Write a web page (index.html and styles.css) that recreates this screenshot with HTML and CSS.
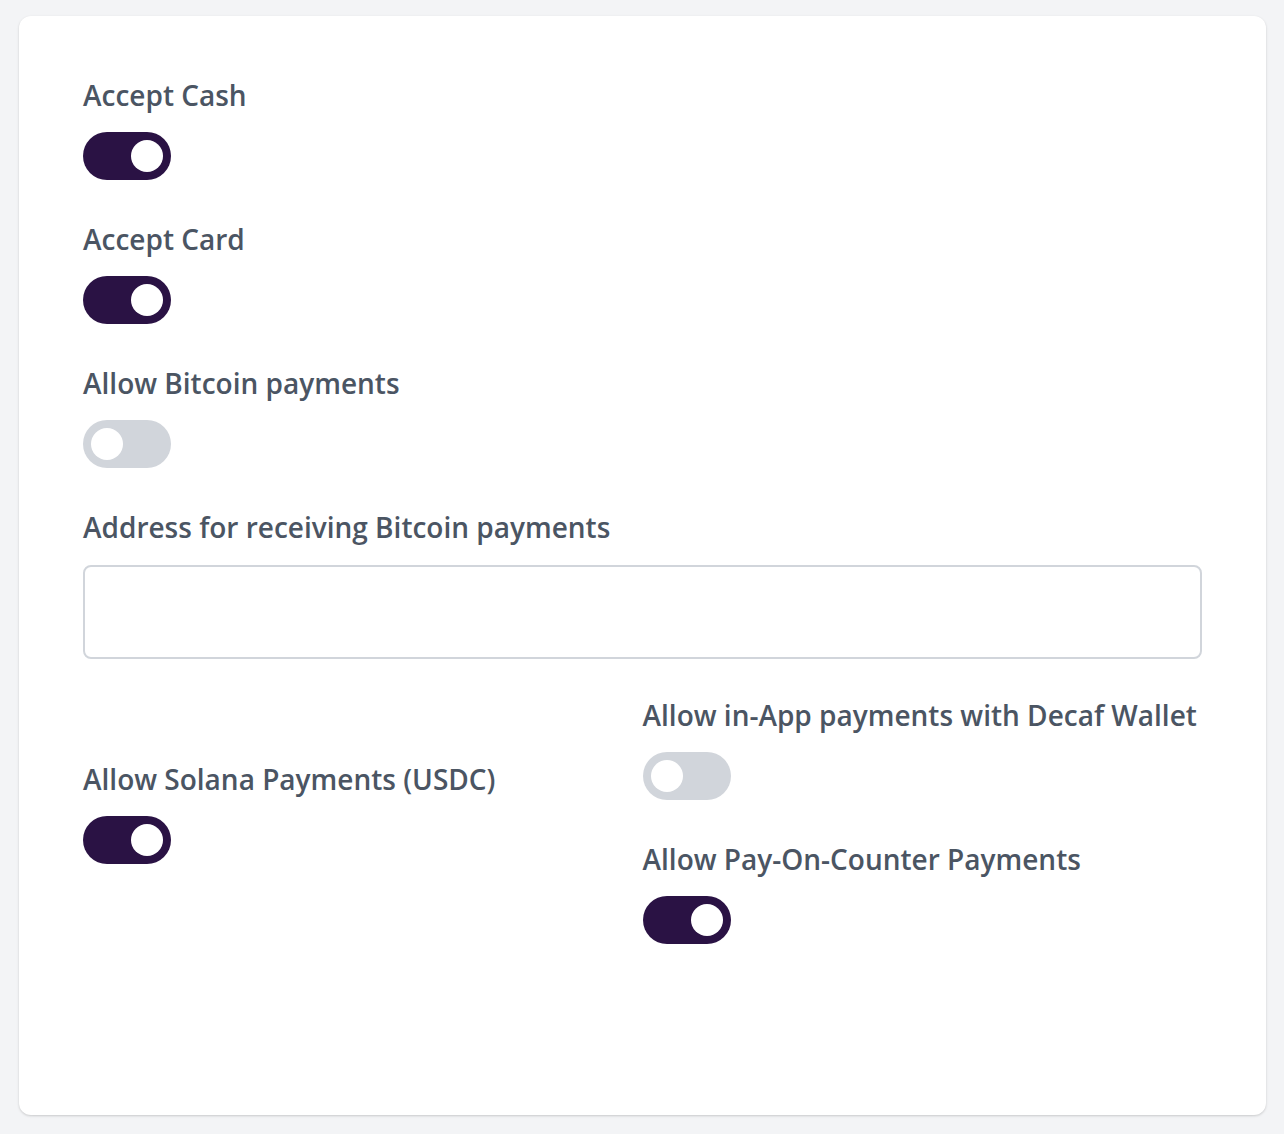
FILE: index.html
```html
<!DOCTYPE html>
<html lang="en">
<head>
    <meta charset="UTF-8">
    <meta name="viewport" content="width=device-width, initial-scale=1.0">
    <title>Payment Settings</title>
    <link rel="stylesheet" href="styles.css">
</head>
<body>
    <div class="card">
        <div class="field">
            <label class="label">Accept Cash</label>
            <button class="toggle on" type="button"><span class="knob"></span></button>
        </div>
        <div class="field">
            <label class="label">Accept Card</label>
            <button class="toggle on" type="button"><span class="knob"></span></button>
        </div>
        <div class="field">
            <label class="label">Allow Bitcoin payments</label>
            <button class="toggle" type="button"><span class="knob"></span></button>
        </div>
        <div class="field">
            <label class="label label-input" for="btcAddress">Address for receiving Bitcoin payments</label>
            <input class="text-input" id="btcAddress" type="text">
        </div>

        <!-- Wallet options -->
        <div class="columns">
            <div class="column column-left">
                <div class="field last">
                    <label class="label">Allow Solana Payments (USDC)</label>
                    <button class="toggle on" type="button"><span class="knob"></span></button>
                </div>
            </div>
            <div class="column">
                <div class="field">
                    <label class="label">Allow in-App payments with Decaf Wallet</label>
                    <button class="toggle" type="button"><span class="knob"></span></button>
                </div>
                <div class="field last">
                    <label class="label">Allow Pay-On-Counter Payments</label>
                    <button class="toggle on" type="button"><span class="knob"></span></button>
                </div>
            </div>
        </div>
    </div>
</body>
</html>
```

FILE: styles.css
```css
* {
    box-sizing: border-box;
}
body {
    margin: 0;
    padding: 16px 18px 19px 19px;
    background: #f3f4f6;
    font-family: "Open Sans", Arial, sans-serif;
}
.card {
    background: white;
    border-radius: 12px;
    box-shadow: 0 1px 3px rgba(0, 0, 0, 0.12), 0 1px 2px rgba(0, 0, 0, 0.06);
    padding: 59px 64px 171px 64px;
}
.field {
    margin-bottom: 39px;
}
.field.last {
    margin-bottom: 0;
}
.label {
    display: block;
    font-size: 28px;
    font-weight: 600;
    line-height: 40px;
    color: #4b5563;
    margin-bottom: 17px;
}
.label-input {
    margin-bottom: 18px;
}
.toggle {
    display: flex;
    align-items: center;
    width: 88px;
    height: 48px;
    padding: 0 8px;
    border: none;
    border-radius: 24px;
    background: #d1d5db;
    cursor: pointer;
}
.toggle .knob {
    width: 32px;
    height: 32px;
    border-radius: 50%;
    background: white;
}
.toggle.on {
    background: #2a1244;
    justify-content: flex-end;
}
.text-input {
    display: block;
    width: 100%;
    height: 94px;
    border: 2px solid #d1d5db;
    border-radius: 8px;
    padding: 0 20px;
    font-size: 28px;
    font-family: inherit;
}
.columns {
    display: grid;
    grid-template-columns: 1fr 1fr;
    align-items: center;
    margin-top: -3px;
}
.column-left {
    padding-bottom: 16px;
}
```
